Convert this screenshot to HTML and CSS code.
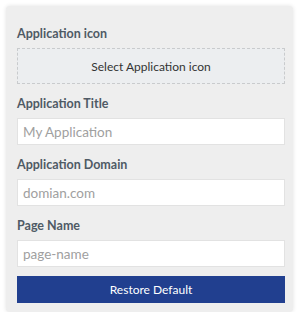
FILE: index.html
```html
<!DOCTYPE html>
<html lang="en">
<head>
    <meta charset="UTF-8">
    <meta name="viewport" content="width=device-width, initial-scale=1.0">
    <title>Application Settings</title>
    <link rel="stylesheet" href="styles.css">
</head>
<body>

<div class="panel">
    <div class="field">
        <label>Application icon</label>
        <div class="icon-drop">Select Application icon</div>
    </div>
    <div class="field">
        <label for="appTitle">Application Title</label>
        <input type="text" id="appTitle" placeholder="My Application">
    </div>
    <div class="field">
        <label for="appDomain">Application Domain</label>
        <input type="text" id="appDomain" placeholder="domian.com">
    </div>
    <div class="field">
        <label for="pageName">Page Name</label>
        <input type="text" id="pageName" placeholder="page-name">
    </div>
    <button class="restore">Restore Default</button>
</div>

</body>
</html>
```

FILE: styles.css
```css
body {
    font-family: Lato, "Open Sans", Arial, sans-serif;
    background-color: #ffffff;
    margin: 0;
    padding: 6px 6px 0 6px;
}
.panel {
    width: 287px;
    box-sizing: border-box;
    background: #eeeeee;
    border-radius: 4px;
    box-shadow: 0 0 4px rgba(0, 0, 0, 0.12);
    padding: 19px 8px 9px 11px;
    display: flex;
    flex-direction: column;
}
.field {
    display: flex;
    flex-direction: column;
    margin-bottom: 11px;
}
.field label {
    font-size: 12.5px;
    font-weight: 700;
    color: #4f5a65;
    line-height: 18px;
    margin-bottom: 5px;
}
.icon-drop {
    height: 36px;
    box-sizing: border-box;
    border: 1px dashed #c9cbcd;
    background: #eceef0;
    color: #333;
    font-size: 12px;
    display: flex;
    align-items: center;
    justify-content: center;
}
.field input {
    height: 27px;
    box-sizing: border-box;
    border: 1px solid #e2e2e2;
    background: #fff;
    padding: 0 5px;
    font-family: inherit;
    font-size: 13.5px;
    color: #333;
    outline: none;
}
.field input::placeholder {
    color: #a0a0a0;
}
.restore {
    margin-top: -2px;
    height: 27px;
    border: none;
    background: #213f8f;
    color: #fff;
    font-family: inherit;
    font-size: 12px;
    cursor: pointer;
}
```
